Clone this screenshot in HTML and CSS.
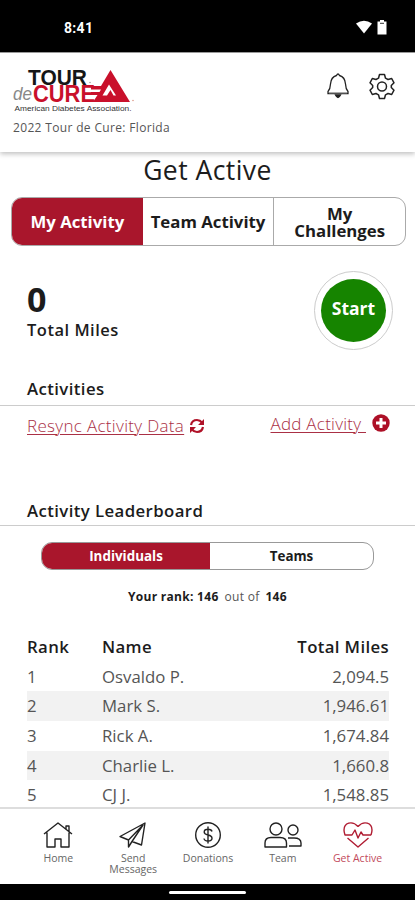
FILE: index.html
```html
<!DOCTYPE html>
<html lang="en">
<head>
<meta charset="utf-8">
<title>Get Active</title>
<link rel="stylesheet" href="styles.css">
</head>
<body>
<div class="app">
  <div class="status">
    <span class="clock">8:41</span>
    <svg class="signals" width="34" height="18" viewBox="0 0 34 18" fill="#fff">
      <path d="M1 4.500Q9 -.800 17 4.500L9 14.500Z"/>
      <path d="M25 1h4v1.500h2.500v13h-9V2.500H25Z"/>
      <path d="M25 4.300h4" stroke="#333" stroke-width="1"/>
    </svg>
  </div>
  <header class="header">
    <div class="brand">
      <svg class="logo" width="124" height="46" viewBox="0 0 124 46">
        <g font-family="Liberation Sans, sans-serif">
          <text x="15" y="17" font-size="22" font-weight="700" textLength="59" lengthAdjust="spacingAndGlyphs" fill="#161616">TOUR</text>
          <text x="0" y="31.500" font-size="18" font-style="italic" textLength="19" lengthAdjust="spacingAndGlyphs" fill="#888">de</text>
          <text x="20" y="34" font-size="23" font-weight="700" textLength="62" lengthAdjust="spacingAndGlyphs" fill="#c9102b">CURE</text>
          <text x="1.500" y="42.500" font-size="6.800" textLength="117" lengthAdjust="spacingAndGlyphs" fill="#333">American Diabetes Association.</text>
        </g>
        <path d="M97.500 2L117 34H80L84.500 27H78V24H86.500L88 21.500H78V18H88Z" fill="#c9102b"/>
        <path d="M96 16.500L89.500 27.500H94L97.500 22L100.500 27.500H103Z" fill="#fff"/>
        <circle cx="120" cy="32.500" r=".8" fill="#d98"/>
        <circle cx="77" cy="14.500" r=".7" fill="#888"/>
      </svg>
      <div class="event">2022 Tour de Cure: Florida</div>
    </div>
    <div class="tools">
      <svg width="24" height="28" viewBox="0 0 24 28" fill="none" stroke="#222" stroke-width="1.300">
        <path d="M10.500 3.500Q12 .5 13.500 3.500Q19 5 19.500 12Q19.700 17 22 19.500V21.500H2V19.500Q4.300 17 4.500 12Q5 5 10.500 3.500Z"/>
        <path d="M3 20.700H21" stroke="#aaa"/>
        <path d="M9.500 23Q12 28 14.500 23Z" fill="#222"/>
      </svg>
      <svg width="28" height="28" viewBox="0 0 28 28" fill="none" stroke="#222" stroke-width="1.500" stroke-linejoin="round">
        <path d="M11.500 2.500H16.500L17.500 6.200L20 7.500L23.700 6.500L26 10.800L23.300 13.500V15.500L26 18.200L23.700 22.500L20 21.500L17.500 22.800L16.500 26.500H11.500L10.500 22.800L8 21.500L4.300 22.500L2 18.200L4.700 15.500V13.500L2 10.800L4.300 6.500L8 7.500L10.500 6.200Z"/>
        <circle cx="14" cy="14.500" r="4.500"/>
      </svg>
    </div>
  </header>
  <main class="main">
    <h1 class="title">Get Active</h1>
    <div class="tabs">
      <div class="tab tab-on">My Activity</div>
      <div class="tab">Team Activity</div>
      <div class="tab">My<br>Challenges</div>
    </div>
    <section class="summary">
      <div>
        <div class="total">0</div>
        <div class="total-label">Total Miles</div>
      </div>
      <div class="start-ring"><div class="start">Start</div></div>
    </section>
    <h2 class="section-title">Activities</h2>
    <div class="links">
      <div class="link resync"><span class="link-text">Resync Activity Data</span>
        <svg width="16" height="16" viewBox="0 0 16 16" fill="none" stroke="#b01228" stroke-width="2.200">
          <path d="M2 7Q3 2 8 2Q11 2 13.500 5M14 9Q13 14 8 14Q5 14 2.500 11"/>
          <path d="M15 1V7H9ZM1 15V9H7Z" fill="#b01228" stroke="none"/>
        </svg>
      </div>
      <div class="link add"><span class="link-text">Add Activity&nbsp;</span>
        <svg width="18" height="18" viewBox="0 0 18 18"><circle cx="9" cy="9" r="8.700" fill="#ad1027"/><path d="M9 4V14M4 9H14" stroke="#fff" stroke-width="3"/></svg>
      </div>
    </div>
    <h2 class="section-title leader-title">Activity Leaderboard</h2>
    <div class="toggle">
      <div class="option option-on">Individuals</div>
      <div class="option">Teams</div>
    </div>
    <div class="rank"><b>Your rank: 146</b><span>out of</span><b>146</b></div>
    <div class="board">
      <div class="row head"><span>Rank</span><span>Name</span><span>Total Miles</span></div>
      <div class="row"><span>1</span><span>Osvaldo P.</span><span>2,094.5</span></div>
      <div class="row"><span>2</span><span>Mark S.</span><span>1,946.61</span></div>
      <div class="row"><span>3</span><span>Rick A.</span><span>1,674.84</span></div>
      <div class="row"><span>4</span><span>Charlie L.</span><span>1,660.8</span></div>
      <div class="row"><span>5</span><span>CJ J.</span><span>1,548.85</span></div>
    </div>
  </main>
  <nav class="nav">
    <div class="item">
      <svg width="32" height="28" viewBox="0 0 32 28"><path d="M2 13L16 2L30 13M5 11.500V26H13V18H19V26H27V11.500M24 8V5H27V10.500"/></svg>
      <span>Home</span>
    </div>
    <div class="item">
      <svg width="30" height="28" viewBox="0 0 30 28"><path d="M2 15.500L27 2L23.500 24L14 20.500L10.500 26V19L2 15.500ZM10.500 19L25 4L14 20.500"/></svg>
      <span>Send<br>Messages</span>
    </div>
    <div class="item">
      <svg width="28" height="28" viewBox="0 0 28 28"><circle cx="14" cy="14" r="12.300"/><path d="M18 10.500Q17.500 8.300 14 8.300Q10.200 8.300 10.200 11Q10.200 13.200 14 14Q18 14.800 18 17.300Q18 20 14 20Q10.300 20 10 17.500M14 5.500V22.500"/></svg>
      <span>Donations</span>
    </div>
    <div class="item">
      <svg width="40" height="28" viewBox="0 0 40 28"><circle cx="13" cy="8" r="6"/><circle cx="30" cy="9" r="5"/><path d="M2 26V22Q2 16.500 8 16.500H17Q23.500 16.500 23.500 22V26ZM25 17H31Q38 17 38 22V25H26"/></svg>
      <span>Team</span>
    </div>
    <div class="item active">
      <svg width="32" height="28" viewBox="0 0 32 28"><path d="M16 5.500C10-1 2 2 2 9Q2 11 3 14H10L13 9L16 17L19 11L21 14H29M29 14Q30 11 30 9C30 2 22-1 16 5.500M5.500 17L16 26L26.500 17"/></svg>
      <span>Get Active</span>
    </div>
  </nav>
  <div class="gesture"><div class="pill"></div></div>
</div>
</body>
</html>
```
FILE: styles.css
```css
* { box-sizing: border-box; }
body { margin: 0; background: #fff; font-family: "Open Sans", sans-serif; color: #1c1c1c; }
svg { display: block; flex: none; }
.app { width: 415px; height: 900px; display: flex; flex-direction: column; overflow: hidden; }
.status { height: 52px; flex: none; background: #000; color: #fff; display: flex; justify-content: space-between; padding: 19px 26px 0 64px; }
.clock { font: 700 14px/18px Roboto, sans-serif; letter-spacing: .3px; }
.header { height: 100px; flex: none; display: flex; justify-content: space-between; padding: 15px 19px 0 13px; position: relative; border-top: 1px solid #999; box-shadow: 0 2px 5px rgba(0,0,0,.25); }
.logo { overflow: visible; }
.event { font-size: 12px; line-height: 16px; margin-top: 6px; color: #555; letter-spacing: .34px; white-space: nowrap; }
.tools { display: flex; gap: 18px; padding-top: 4px; }
.main { flex: 1; min-height: 0; overflow: hidden; }
.title { margin: 0; height: 37px; font-size: 26.500px; line-height: 37px; font-weight: 500; text-align: center; letter-spacing: .45px; }
.tabs { margin: 8px 9px 0 11px; height: 49px; border: 1px solid #aaa; border-radius: 11px; display: flex; overflow: hidden; }
.tab { flex: 1; display: flex; align-items: center; justify-content: center; text-align: center; font-size: 16.800px; line-height: 17px; font-weight: 700; white-space: nowrap; }
.tab + .tab + .tab { border-left: 1px solid #aaa; }
.tab-on { background: #a9162c; color: #fff; }
.summary { height: 117px; padding: 25px 22px 0 27px; display: flex; justify-content: space-between; }
.total { font-size: 34px; line-height: 40px; font-weight: 700; margin-top: 8px; }
.total-label { font-size: 16.500px; line-height: 22px; font-weight: 600; letter-spacing: .5px; }
.start-ring { width: 79px; height: 79px; border: 1.500px solid #ccc; border-radius: 50%; display: grid; place-items: center; }
.start { width: 65px; height: 63px; border-radius: 50%; background: #168400; color: #fff; font-size: 17.500px; line-height: 58px; font-weight: 700; text-align: center; }
.section-title { margin: 0; padding: 15px 27px 0; height: 43px; font-size: 16.800px; line-height: 22px; font-weight: 600; border-bottom: 1px solid #ccc; letter-spacing: .4px; }
.leader-title { padding-top: 17px; }
.links { height: 77px; padding: 8px 25px 0 27px; display: flex; justify-content: space-between; }
.link { display: flex; color: #aa3045; font-size: 17px; line-height: 22px; font-weight: 300; letter-spacing: .32px; }
.link-text { text-decoration: underline; text-decoration-thickness: 1px; text-underline-offset: 2px; }
.resync { gap: 5px; padding-top: 1px; }
.resync svg { margin-top: 3px; }
.add { gap: 6px; line-height: 20px; letter-spacing: .25px; }
.toggle { margin: 16px 41px 0; height: 28px; border: 1px solid #999; border-radius: 11px; display: flex; overflow: hidden; }
.option { flex: 1; font-size: 13.400px; line-height: 26px; font-weight: 700; text-align: center; }
.option-on { flex: 0 0 168px; background: #a9162c; color: #fff; }
.rank { height: 20px; margin-top: 17px; display: flex; justify-content: center; gap: 6px; font-size: 12px; line-height: 20px; letter-spacing: .28px; }
.rank span { color: #555; }
.board { margin: 25px 26px 0 27px; }
.row { display: grid; grid-template-columns: 75px 1fr 1fr; height: 29.700px; line-height: 29px; font-size: 16.800px; color: #555; }
.row span:last-child { text-align: right; }
.row:nth-child(odd):not(.head) { background: #f2f2f2; }
.head { font-weight: 600; color: #1c1c1c; letter-spacing: .35px; }
.nav { height: 77px; flex: none; border-top: 2px solid #ddd; display: flex; padding: 12px 20px 0 21px; }
.item { flex: 1; display: flex; flex-direction: column; align-items: center; gap: 4px; font-size: 10.500px; line-height: 10.500px; color: #666; text-align: center; white-space: nowrap; }
.item svg { fill: none; stroke: #222; stroke-width: 1.400; stroke-linejoin: round; }
.item.active { color: #c24a5b; }
.item.active svg { stroke: #b01c32; }
.gesture { height: 16px; flex: none; background: #000; display: flex; justify-content: center; padding-top: 7px; }
.pill { width: 77px; height: 3px; border-radius: 2px; background: #fff; }
```
